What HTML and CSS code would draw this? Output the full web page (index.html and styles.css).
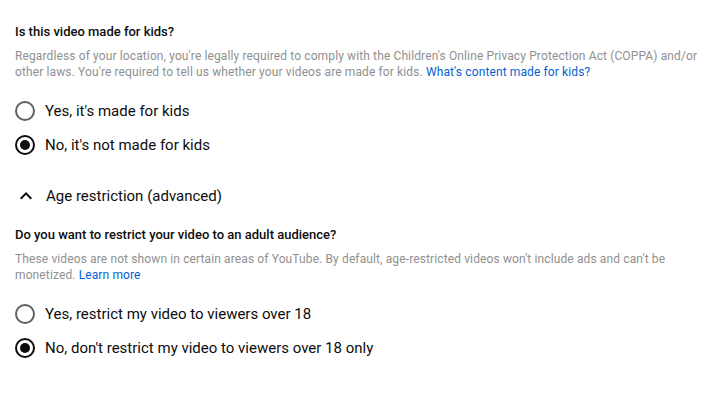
FILE: index.html
```html
<!DOCTYPE html>
<html lang="en">
<head>
  <meta charset="UTF-8" />
  <title>Audience</title>
  <link rel="stylesheet" href="styles.css">
</head>
<body>

<div class="audience">
  <!-- Made for kids -->
  <section class="question">
    <h3 class="question-title">Is this video made for kids?</h3>
    <p class="question-desc">
      Regardless of your location, you're legally required to comply with the Children's Online Privacy Protection Act (COPPA) and/or other laws. You're required to tell us whether your videos are made for kids.
      <a href="#" class="link">What's content made for kids?</a>
    </p>
    <div class="radio-group">
      <label class="radio">
        <span class="radio-circle"></span>
        <span class="radio-label">Yes, it's made for kids</span>
      </label>
      <label class="radio checked">
        <span class="radio-circle"></span>
        <span class="radio-label">No, it's not made for kids</span>
      </label>
    </div>
  </section>

  <!-- Age restriction toggle -->
  <div class="toggle">
    <svg class="toggle-icon" viewBox="0 0 24 24" width="24" height="24">
      <path d="M12 8l-6 6 1.41 1.41L12 10.83l4.59 4.58L18 14z" fill="#0d0d0d"/>
    </svg>
    <span class="toggle-label">Age restriction (advanced)</span>
  </div>

  <!-- Age restriction -->
  <section class="question">
    <h3 class="question-title">Do you want to restrict your video to an adult audience?</h3>
    <p class="question-desc">
      These videos are not shown in certain areas of YouTube. By default, age-restricted videos won't include ads and can't be monetized.
      <a href="#" class="link">Learn more</a>
    </p>
    <div class="radio-group">
      <label class="radio">
        <span class="radio-circle"></span>
        <span class="radio-label">Yes, restrict my video to viewers over 18</span>
      </label>
      <label class="radio checked">
        <span class="radio-circle"></span>
        <span class="radio-label">No, don't restrict my video to viewers over 18 only</span>
      </label>
    </div>
  </section>
</div>

</body>
</html>
```

FILE: styles.css
```css
/* Page */
body {
  margin: 0;
  padding: 0;
  background: #fff;
  font-family: Roboto, "Noto Sans", sans-serif;
  color: #0d0d0d;
}

.audience {
  width: 684px;
  padding: 22px 3px 0 15px;
}

/* Question blocks */
.question-title {
  margin: 0 0 6px;
  font-size: 13px;
  font-weight: 500;
  line-height: 20px;
  color: #0d0d0d;
}

.question-desc {
  margin: 0;
  font-size: 12px;
  line-height: 16px;
  letter-spacing: 0.12px;
  color: #909090;
}

.link {
  color: #065fd4;
  text-decoration: none;
}

/* Radios */
.radio-group {
  padding-top: 14px;
}

.radio {
  display: flex;
  align-items: center;
  height: 34px;
  cursor: pointer;
}

.radio-circle {
  width: 16px;
  height: 16px;
  border: 2px solid #606060;
  border-radius: 50%;
  position: relative;
  flex-shrink: 0;
}

.radio.checked .radio-circle {
  border-color: #0d0d0d;
}

.radio.checked .radio-circle::after {
  content: "";
  position: absolute;
  left: 3px;
  top: 3px;
  width: 10px;
  height: 10px;
  border-radius: 50%;
  background: #0d0d0d;
}

.radio-label {
  margin-left: 10px;
  font-size: 15px;
  color: #0d0d0d;
}

/* Toggle */
.toggle {
  display: flex;
  align-items: center;
  height: 32px;
  margin: 18px 0 13px -1px;
}

.toggle-icon {
  flex-shrink: 0;
}

.toggle-label {
  margin-left: 8px;
  font-size: 15px;
}
```
